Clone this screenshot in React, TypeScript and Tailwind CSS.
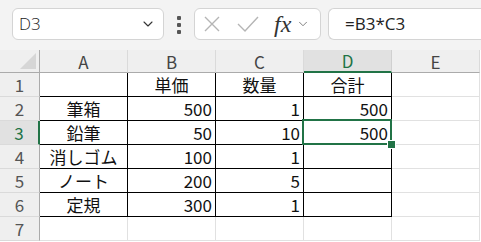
import React from 'react';
import { ChevronDown } from 'lucide-react';

const COLS = ['A', 'B', 'C', 'D', 'E'];

const rows: { a?: string; b?: string; c?: string; d?: string }[] = [
	{ a: '', b: '単価', c: '数量', d: '合計' },
	{ a: '筆箱', b: '500', c: '1', d: '500' },
	{ a: '鉛筆', b: '50', c: '10', d: '500' },
	{ a: '消しゴム', b: '100', c: '1', d: '' },
	{ a: 'ノート', b: '200', c: '5', d: '' },
	{ a: '定規', b: '300', c: '1', d: '' },
	{},
];

const isNum = (v?: string) => !!v && /^\d+$/.test(v);

function Cell({ value, boxed, selected }: { value?: string; boxed: boolean; selected?: boolean }) {
	const border = boxed ? 'border-black' : 'border-[#e1e1e1]';
	return (
		<div className={`relative h-[24px] border-r border-b ${border} flex items-center ${isNum(value) ? 'justify-end pr-[3px]' : 'justify-center'} ${selected ? 'z-10' : ''}`}>
			<span className="text-[17px] leading-none text-[#111]">{value}</span>
			{selected && (
				<>
					<div className="absolute -left-[2px] -top-[2px] -right-[1px] -bottom-[1px] border-2 border-[#217346]" />
					<div className="absolute -right-[5px] -bottom-[5px] w-[9px] h-[9px] bg-[#217346] border-[1.5px] border-white" />
				</>
			)}
		</div>
	);
}

export default function App() {
	return (
		<div className="w-[481px] h-[242px] overflow-hidden bg-white" style={{ fontFamily: '"Noto Sans CJK JP", "Noto Sans", sans-serif' }}>
			{/* formula bar */}
			<div className="h-[50px] bg-[#f3f3f3] flex items-start pt-[8px]">
				<div className="ml-[12px] w-[152px] h-[32px] rounded-[6px] border border-[#d4d4d4] bg-white flex items-center justify-between pl-[6px] pr-[7px]">
					<span className="text-[17px] text-[#222] font-light" style={{ fontFamily: '"Open Sans", sans-serif' }}>D3</span>
					<ChevronDown className="w-[16px] h-[16px] text-[#333]" strokeWidth={1.6} />
				</div>
				<div className="ml-[13px] mt-[8px] flex flex-col gap-[3px]">
					<div className="w-[4px] h-[4px] bg-[#555] rounded-[1px]" />
					<div className="w-[4px] h-[4px] bg-[#555] rounded-[1px]" />
					<div className="w-[4px] h-[4px] bg-[#555] rounded-[1px]" />
				</div>
				<div className="ml-[13px] w-[127px] h-[32px] rounded-[6px] border border-[#d4d4d4] bg-white flex items-center pl-[8px]">
					<svg width="18" height="18" viewBox="0 0 18 18" className="text-[#b5b5b5]">
						<path d="M2 2 L16 16 M16 2 L2 16" stroke="currentColor" strokeWidth="1.4" fill="none" />
					</svg>
					<svg width="22" height="18" viewBox="0 0 22 18" className="ml-[16px] text-[#b5b5b5]">
						<path d="M1 9 L8 16 L21 2" stroke="currentColor" strokeWidth="1.4" fill="none" />
					</svg>
					<span className="ml-[15px] text-[24px] italic leading-none text-[#333]" style={{ fontFamily: '"Liberation Serif", serif' }}>fx</span>
					<ChevronDown className="ml-[5px] w-[14px] h-[14px] text-[#666]" strokeWidth={1.4} />
				</div>
				<div className="ml-[7px] flex-1 h-[32px] rounded-l-[6px] border border-r-0 border-[#d4d4d4] bg-white flex items-center pl-[16px]">
					<span className="text-[17px] text-[#222]" style={{ fontFamily: '"Open Sans", sans-serif' }}>=B3*C3</span>
				</div>
			</div>

			{/* grid */}
			<div className="grid grid-cols-[40px_88px_88px_88px_88px_88px]">
				{/* header row */}
				<div className="h-[23px] bg-[#efefef] border-r border-b border-[#ababab] relative">
					<svg width="16" height="16" viewBox="0 0 16 16" className="absolute right-[3px] bottom-[3px]">
						<polygon points="16,0 16,16 0,16" fill="#d6d6d6" />
					</svg>
				</div>
				{COLS.map((c) => (
					<div
						key={c}
						className={`h-[23px] flex items-center justify-center border-r text-[17px] leading-none ${
							c === 'D'
								? 'bg-[#e1e1e1] text-[#217346] border-[#d0d0d0] border-b-2 border-b-[#217346]'
								: 'bg-[#efefef] text-[#444] border-[#dadada] border-b border-b-[#ababab]'
						}`}
					>
						{c}
					</div>
				))}

				{rows.map((r, i) => {
					const n = i + 1;
					const boxed = n <= 6;
					return (
						<React.Fragment key={n}>
							<div
								className={`h-[24px] flex items-center justify-center border-b border-[#dadada] text-[17px] leading-none ${
									n === 3
										? 'bg-[#e1e1e1] text-[#217346] border-r-2 border-r-[#217346]'
										: 'bg-[#efefef] text-[#555] border-r border-r-[#ababab]'
								}`}
							>
								{n}
							</div>
							<Cell value={r.a} boxed={boxed} />
							<Cell value={r.b} boxed={boxed} />
							<Cell value={r.c} boxed={boxed} />
							<Cell value={r.d} boxed={boxed} selected={n === 3} />
							<Cell value="" boxed={false} />
						</React.Fragment>
					);
				})}
			</div>
		</div>
	);
}
